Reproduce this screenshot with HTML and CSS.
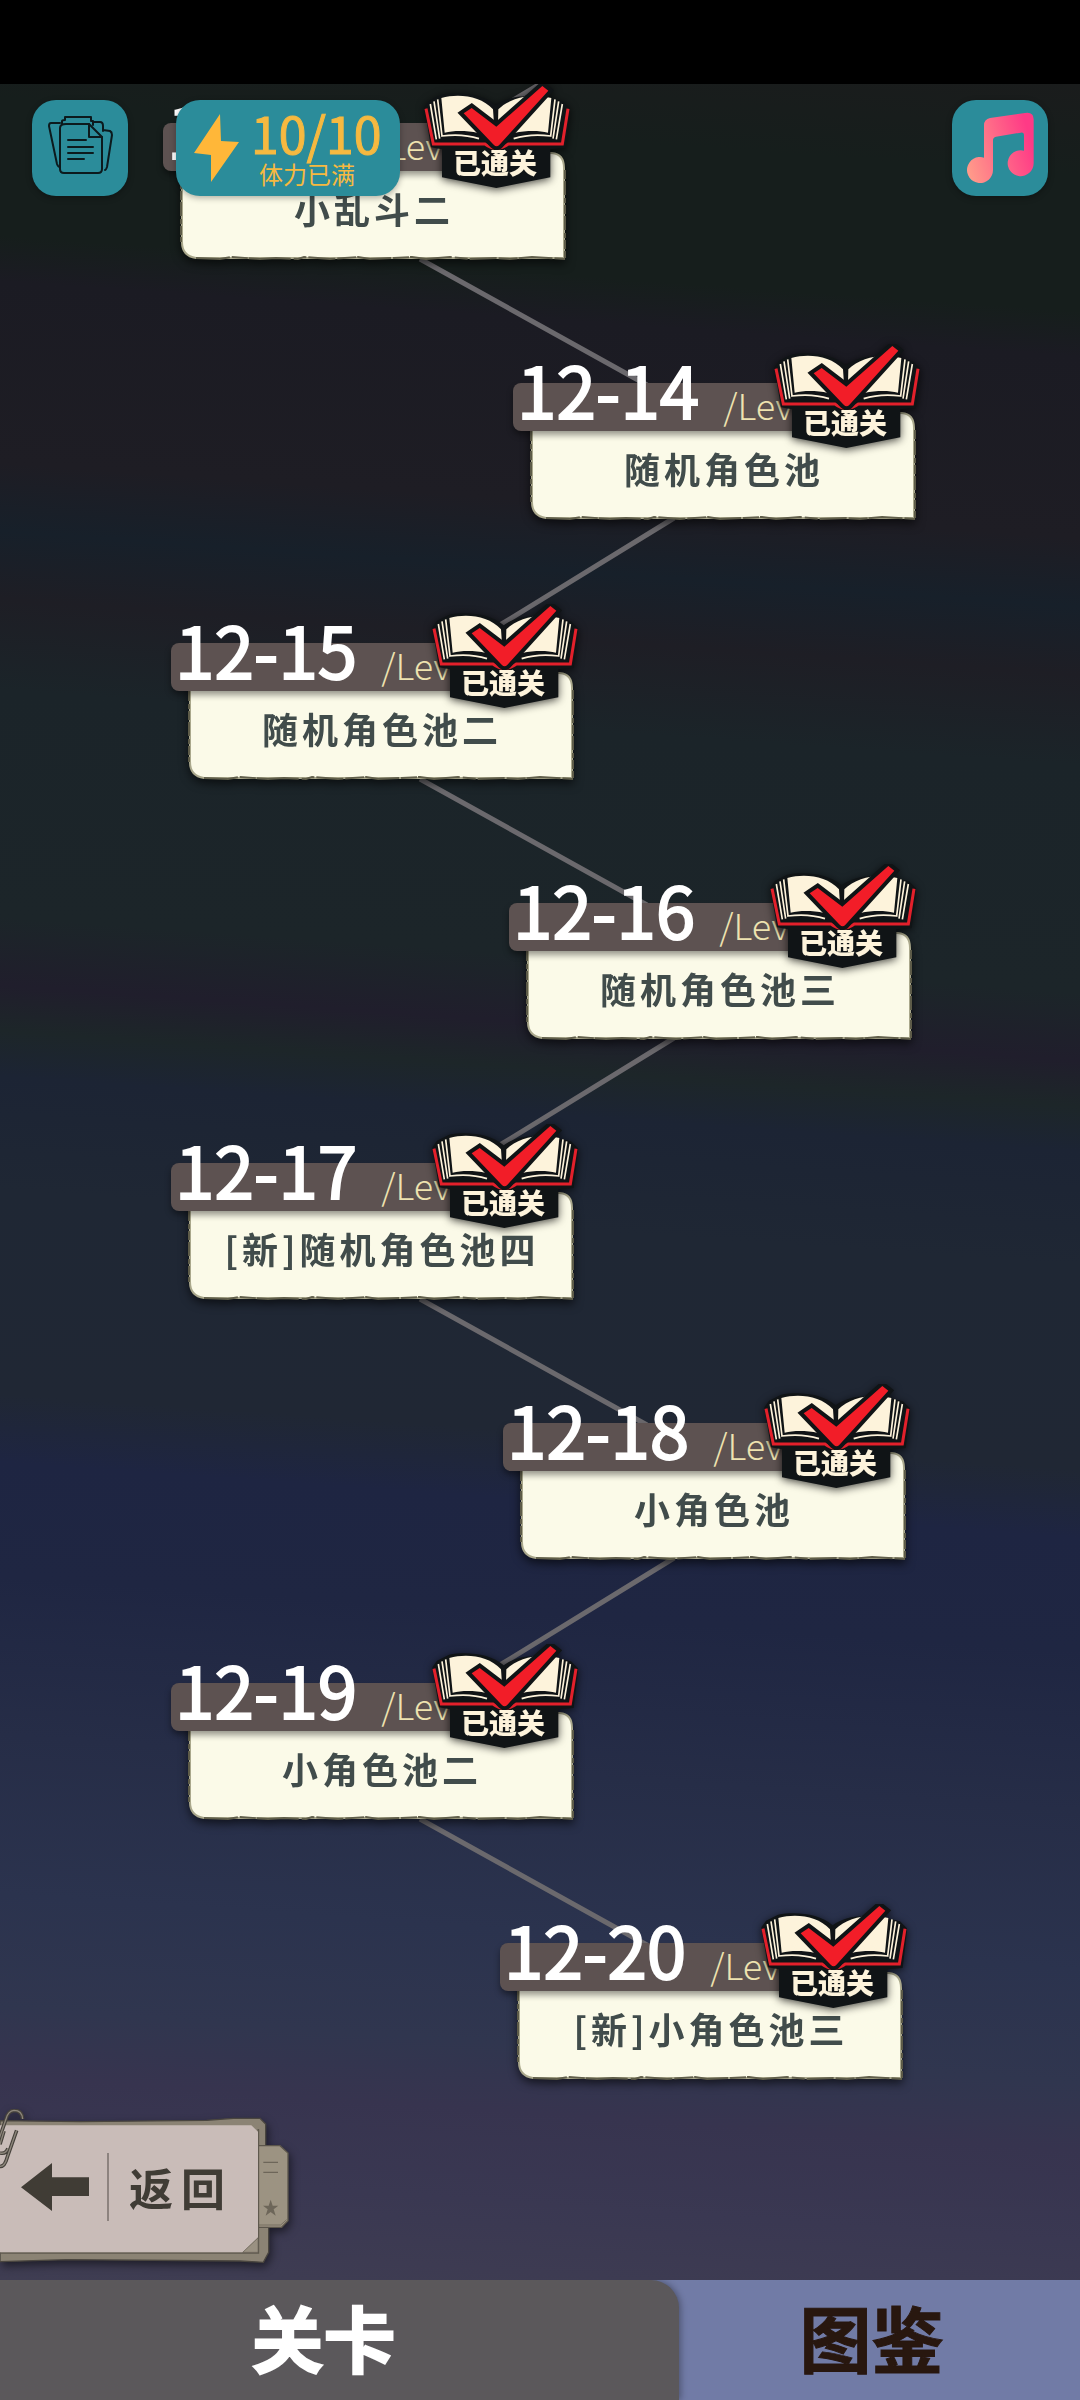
FILE: index.html
```html
<!DOCTYPE html>
<html lang="zh-CN">
<head>
  <meta charset="UTF-8">
  <meta name="viewport" content="width=device-width, initial-scale=1">
  <title>关卡</title>
  <link rel="stylesheet" href="styles.css">
</head>
<body>
<!-- shared shapes -->
<svg class="defs" aria-hidden="true">
  <symbol id="paper" viewBox="0 0 386 108" preserveAspectRatio="none">
    <path d="M8 1 H372 Q384 2 384 16 V106 H16 Q2 104 2 90 V1 Z" fill="#fbfae8" stroke="#aaa88c" stroke-width="2"/>
    <path d="M16 106 L40 107 L52 105 L80 107 L96 106 L118 107 L124 105 L150 107 L178 105 L190 107 L214 106 L232 105 L246 107 L270 105 L290 107 L316 106 L330 107 L352 105 L385 107" fill="none" stroke="#605e4a" stroke-width="2" stroke-dasharray="34 2 16 1 42 3 13 2 27 2 19 1"/>
    <path d="M385 18 V106 M1 4 V90" fill="none" stroke="#5d5b48" stroke-width="2" stroke-dasharray="9 2 14 3 5 2"/>
  </symbol>
  <symbol id="book" viewBox="45 42 438 315">
    <path d="M46 112 L60 92 L96 74 C150 64 220 70 260 106 C290 84 325 78 352 80 L396 42 L426 58 L412 82 L462 94 L484 116 L470 234 L424 238 V322 L262 354 L99 322 V238 L66 232 Z" fill="#101416"/>
    <path d="M51 116 L73 222 H228 Q262 248 298 222 H460 L477 116" fill="none" stroke="#e3202b" stroke-width="9"/>
    <path d="M97 84 C150 70 215 78 252 118 L258 206 C215 184 150 178 107 188 Z" fill="#fdf3db"/>
    <path d="M427 84 C374 70 305 80 268 118 L266 206 C309 184 374 178 417 188 Z" fill="#fdf3db"/>
    <path d="M86 88 L99 198 Q160 190 210 206 M75 94 L92 206 M64 102 L82 208 M438 88 L425 198 Q364 190 314 206 M449 94 L432 206 M460 102 L442 208" fill="none" stroke="#fdf3db" stroke-width="5"/>
    <path d="M260 108 L262 175" stroke="#101416" stroke-width="8"/>
    <path d="M164 130 L188 114 L262 170 L400 48 L418 62 L270 226 Q262 232 254 224 Z" fill="#101416" stroke="#101416" stroke-width="24" stroke-linejoin="miter"/>
    <path d="M164 130 L188 114 L262 170 L400 48 L418 62 L270 226 Q262 232 254 224 Z" fill="#f21d28"/>
  </symbol>
</svg>

<div class="status-bar"></div>

<main class="screen">
  <header class="top-bar">
    <button class="tile" type="button" aria-label="记录">
      <svg viewBox="0 0 96 96" fill="none" stroke="#0c1a1d" stroke-width="2" stroke-linejoin="round" stroke-linecap="round">
        <path d="M34 24 H57 L70 37 V69 Q70 73 66 73 H32 Q28 73 28 69 V28 Q28 24 34 24 Z"/>
        <path d="M57 24 V37 H70"/>
        <path d="M36 40 H54 M36 47 H61 M36 53 H61 M36 59 H52"/>
        <path d="M30 24 V21 Q30 20 33 20 V17 H59 V21 H61 V25"/>
        <path d="M28 23 H19 Q17 23 17 26 L25 64 Q26 67 28 67"/>
        <path d="M61 22 H68 Q71 22 71 26 V31 M71 30 L78 31 Q80 32 80 35 L75 67 Q74 70 73 70"/>
      </svg>
    </button>
    <button class="energy" type="button">
      <svg class="bolt" viewBox="0 0 45 68"><path d="M26 0 L0 39 L17 41 V68 L45 28 L27 27 Z" fill="#ffb739"/></svg>
      <span class="energy-text">
        <span class="energy-count">10/10</span>
        <span class="energy-note">体力已满</span>
      </span>
    </button>
    <button class="tile music" type="button" aria-label="音乐">
      <svg viewBox="36 30 288 288">
        <defs>
          <linearGradient id="note" gradientUnits="userSpaceOnUse" x1="80" y1="240" x2="281" y2="180">
            <stop offset="0" stop-color="#ff9c8a"/>
            <stop offset="1" stop-color="#ff3a86"/>
          </linearGradient>
        </defs>
        <path d="M132 106 Q132 88 150 84 L255 69 Q281 65 281 88 V220 A39 39 0 1 1 252 182 V136 Q252 126 242 128 L168 140 Q159 142 159 150 V240 A39 39 0 1 1 132 203 Z" fill="url(#note)"/>
      </svg>
    </button>
  </header>

  <div class="map">
    <svg class="links" viewBox="0 0 1080 2196" aria-hidden="true">
      <path d="M540 0 L500 24 M420 175 L647 301 M674 434 L500 541 M420 695 L647 821 M674 954 L500 1061 M420 1215 L647 1341 M674 1474 L500 1581 M420 1735 L647 1861"/>
    </svg>
    <ol class="levels">
      <li class="level l13"><a href="#12-13">
        <span class="ribbon"><span class="code">12-13</span><span class="lv">/Level</span></span>
        <span class="card"><svg><use href="#paper"/></svg><span class="name">小乱斗二</span></span>
        <span class="badge"><svg><use href="#book"/></svg><span>已通关</span></span>
      </a></li>
      <li class="level l14"><a href="#12-14">
        <span class="ribbon"><span class="code">12-14</span><span class="lv">/Level</span></span>
        <span class="card"><svg><use href="#paper"/></svg><span class="name">随机角色池</span></span>
        <span class="badge"><svg><use href="#book"/></svg><span>已通关</span></span>
      </a></li>
      <li class="level l15"><a href="#12-15">
        <span class="ribbon"><span class="code">12-15</span><span class="lv">/Level</span></span>
        <span class="card"><svg><use href="#paper"/></svg><span class="name">随机角色池二</span></span>
        <span class="badge"><svg><use href="#book"/></svg><span>已通关</span></span>
      </a></li>
      <li class="level l16"><a href="#12-16">
        <span class="ribbon"><span class="code">12-16</span><span class="lv">/Level</span></span>
        <span class="card"><svg><use href="#paper"/></svg><span class="name">随机角色池三</span></span>
        <span class="badge"><svg><use href="#book"/></svg><span>已通关</span></span>
      </a></li>
      <li class="level l17"><a href="#12-17">
        <span class="ribbon"><span class="code">12-17</span><span class="lv">/Level</span></span>
        <span class="card"><svg><use href="#paper"/></svg><span class="name">[新]随机角色池四</span></span>
        <span class="badge"><svg><use href="#book"/></svg><span>已通关</span></span>
      </a></li>
      <li class="level l18"><a href="#12-18">
        <span class="ribbon"><span class="code">12-18</span><span class="lv">/Level</span></span>
        <span class="card"><svg><use href="#paper"/></svg><span class="name">小角色池</span></span>
        <span class="badge"><svg><use href="#book"/></svg><span>已通关</span></span>
      </a></li>
      <li class="level l19"><a href="#12-19">
        <span class="ribbon"><span class="code">12-19</span><span class="lv">/Level</span></span>
        <span class="card"><svg><use href="#paper"/></svg><span class="name">小角色池二</span></span>
        <span class="badge"><svg><use href="#book"/></svg><span>已通关</span></span>
      </a></li>
      <li class="level l20"><a href="#12-20">
        <span class="ribbon"><span class="code">12-20</span><span class="lv">/Level</span></span>
        <span class="card"><svg><use href="#paper"/></svg><span class="name">[新]小角色池三</span></span>
        <span class="badge"><svg><use href="#book"/></svg><span>已通关</span></span>
      </a></li>
    </ol>
  </div>

  <button class="back" type="button">
    <svg class="back-art" viewBox="0 0 870 465" aria-hidden="true">
      <!-- folder, side tab, sheet -->
      <path d="M0 35 L240 38 L620 34 L700 28 H780 L797 45 V110 L806 350 V430 L790 460 L720 456 L200 452 L0 458 Z" fill="#8b8374" stroke="#4a463f" stroke-width="4"/>
      <path d="M770 110 H840 L864 132 V335 L845 355 H770 Z" fill="#9c9382" stroke="#5c564b" stroke-width="4"/>
      <path d="M770 348 H842 L860 332" fill="none" stroke="#776f61" stroke-width="3"/>
      <path d="M790 160 H834 M790 190 H834" stroke="#6d6659" stroke-width="4"/>
      <path d="M812 272 L818 290 H835 L821 301 L827 320 L812 309 L797 320 L803 301 L789 290 H806 Z" fill="#6d6659"/>
      <path d="M0 432 H775 V60" fill="none" stroke="#5f594e" stroke-width="5"/>
      <path d="M0 49 H754 L774 68 V385 L728 430 H0 Z" fill="#c9bcb8"/>
      <path d="M774 387 L728 430 H774 Z" fill="#9a9182" stroke="#6a6357" stroke-width="2"/>
      <!-- paper clip -->
      <path d="M68 30 Q66 4 42 4 Q24 6 18 30 L0 82 M50 64 L22 144 Q14 174 0 172 M24 118 Q18 136 0 132 M12 66 L0 106" fill="none" stroke="#46423c" stroke-width="11"/>
      <path d="M68 30 Q66 4 42 4 Q24 6 18 30 L0 82 M50 64 L22 144 Q14 174 0 172 M24 118 Q18 136 0 132 M12 66 L0 106" fill="none" stroke="#8d867b" stroke-width="4"/>
    </svg>
    <svg class="arrow" viewBox="0 0 204 144"><path d="M0 73 L93 0 V43 H204 V99 H93 V144 Z" fill="#403c35"/></svg>
    <span class="back-text">返回</span>
  </button>
</main>

<nav class="tabs">
  <a class="tab active" href="#levels">关卡</a>
  <a class="tab" href="#album">图鉴</a>
</nav>
</body>
</html>
```
FILE: styles.css
```css
* { box-sizing: border-box; }
body {
  margin: 0;
  min-height: 100vh;
  display: flex;
  flex-direction: column;
  background: #000;
  font-family: "Noto Sans CJK SC", "Noto Sans", sans-serif;
}
a { color: inherit; text-decoration: none; }
button { border: 0; padding: 0; font-family: inherit; cursor: pointer; }
.defs { position: absolute; width: 0; height: 0; }

.status-bar { height: 84px; background: #000; }

.screen {
  position: relative;
  flex: 1;
  overflow: hidden;
  background: linear-gradient(184deg, #1a1c1c 0%, #161e1c 4%, #161e1c 10%, #1b1b23 12%, #1e1d24 20%, #17202a 23%, #1e1e25 26%, #1b2429 30%, #1c2529 40%, #201e2c 43%, #1d2629 45%, #1c2434 47%, #1f2734 52%, #202734 61%, #1e2542 64%, #1f2642 69%, #262d47 76%, #2b334e 83%, #30364f 88%, #37344f 91%, #3a3852 95%, #3f3d52 100%);
}

/* top buttons */
.top-bar {
  position: absolute;
  z-index: 2;
  top: 16px;
  left: 32px;
  right: 32px;
  display: flex;
  gap: 48px;
}
.tile, .energy {
  height: 96px;
  border-radius: 24px;
  background: #2b8c9a;
  box-shadow: 0 2px 6px rgba(0, 0, 0, 0.3);
}
.tile { width: 96px; }
.tile svg { display: block; width: 96px; height: 96px; }
.music { margin-left: auto; }
.energy {
  width: 224px;
  display: flex;
  align-items: center;
  gap: 12px;
  padding: 0 0 0 18px;
  color: #f6b940;
}
.bolt { width: 45px; height: 68px; }
.energy-text { display: flex; flex-direction: column; align-items: flex-start; }
.energy-count { font-size: 50px; line-height: 52px; font-weight: 400; -webkit-text-stroke: 1px; }
.energy-note { margin-left: 8px; font-size: 24px; line-height: 32px; }

/* level map */
.map { position: relative; max-width: 1080px; margin: 0 auto; }
.links { position: absolute; top: 0; left: 0; width: 100%; }
.links path { fill: none; stroke: #6b696d; stroke-width: 5; }
.levels { position: relative; margin: 0; padding: 0; list-style: none; }
.level { height: 260px; }
.level a { display: block; position: relative; width: 403px; padding-top: 39px; }
.l13 { padding-left: 163px; }
.l14 { padding-left: 513px; }
.l15, .l17, .l19 { padding-left: 171px; }
.l16 { padding-left: 509px; }
.l18 { padding-left: 503px; }
.l20 { padding-left: 500px; }

.ribbon {
  position: relative;
  z-index: 1;
  display: flex;
  align-items: flex-end;
  gap: 24px;
  width: 350px;
  height: 48px;
  padding: 0 0 4px 4px;
  border-radius: 8px;
  background: #5d5251;
  box-shadow: 0 4px 6px rgba(0, 0, 0, 0.4);
}
.code { font-size: 71px; line-height: 78px; font-weight: 400; color: #fff; -webkit-text-stroke: 2px; }
.lv { font-size: 36px; line-height: 46px; font-weight: 300; color: #eee3b0; }
.card {
  position: relative;
  display: flex;
  justify-content: center;
  align-items: center;
  height: 108px;
  margin: -19px 0 0 17px;
  padding: 4px 0 0 2px;
  filter: drop-shadow(0 4px 5px rgba(0, 0, 0, 0.6));
}
.card svg { position: absolute; top: 0; left: 0; width: 100%; height: 100%; }
.name {
  position: relative;
  font-size: 36px;
  line-height: 48px;
  font-weight: 700;
  letter-spacing: 4px;
  color: #414c4b;
}
.badge {
  position: absolute;
  z-index: 2;
  top: 0;
  right: -4px;
  width: 146px;
  height: 105px;
  padding: 62px 4px 0 0;
  text-align: center;
  font-size: 28px;
  line-height: 32px;
  font-weight: 900;
  color: #fdf3db;
  filter: drop-shadow(0 2px 4px rgba(0, 0, 0, 0.7));
}
.badge svg { position: absolute; top: 0; left: 0; width: 100%; height: 100%; }
.badge span { position: relative; }

/* back */
.back {
  position: absolute;
  z-index: 2;
  left: 0;
  bottom: 16px;
  display: flex;
  align-items: center;
  width: 290px;
  height: 155px;
  padding-left: 21px;
  background: none;
  color: #403c35;
  filter: drop-shadow(2px 4px 4px rgba(0, 0, 0, 0.5));
}
.back-art { position: absolute; top: 0; left: 0; width: 290px; height: 155px; }
.arrow { position: relative; width: 68px; height: 48px; }
.back-text {
  position: relative;
  margin-left: 18px;
  padding-left: 20px;
  border-left: 2px solid #8d837f;
  font-size: 44px;
  line-height: 68px;
  font-weight: 700;
  letter-spacing: 8px;
}

/* bottom tabs */
.tabs { display: flex; height: 120px; background: #717ba6; }
.tab {
  flex: 403;
  display: flex;
  align-items: center;
  justify-content: center;
  padding: 0 16px 8px 0;
  font-size: 72px;
  line-height: 96px;
  font-weight: 700;
  color: #28170f;
  -webkit-text-stroke: 1px;
}
.tab.active {
  flex: 677;
  padding-right: 32px;
  border-radius: 0 28px 0 0;
  background: #5b585b;
  box-shadow: 2px 0 6px rgba(0, 0, 0, 0.3);
  color: #fff;
  -webkit-text-stroke: 2px;
}
```
